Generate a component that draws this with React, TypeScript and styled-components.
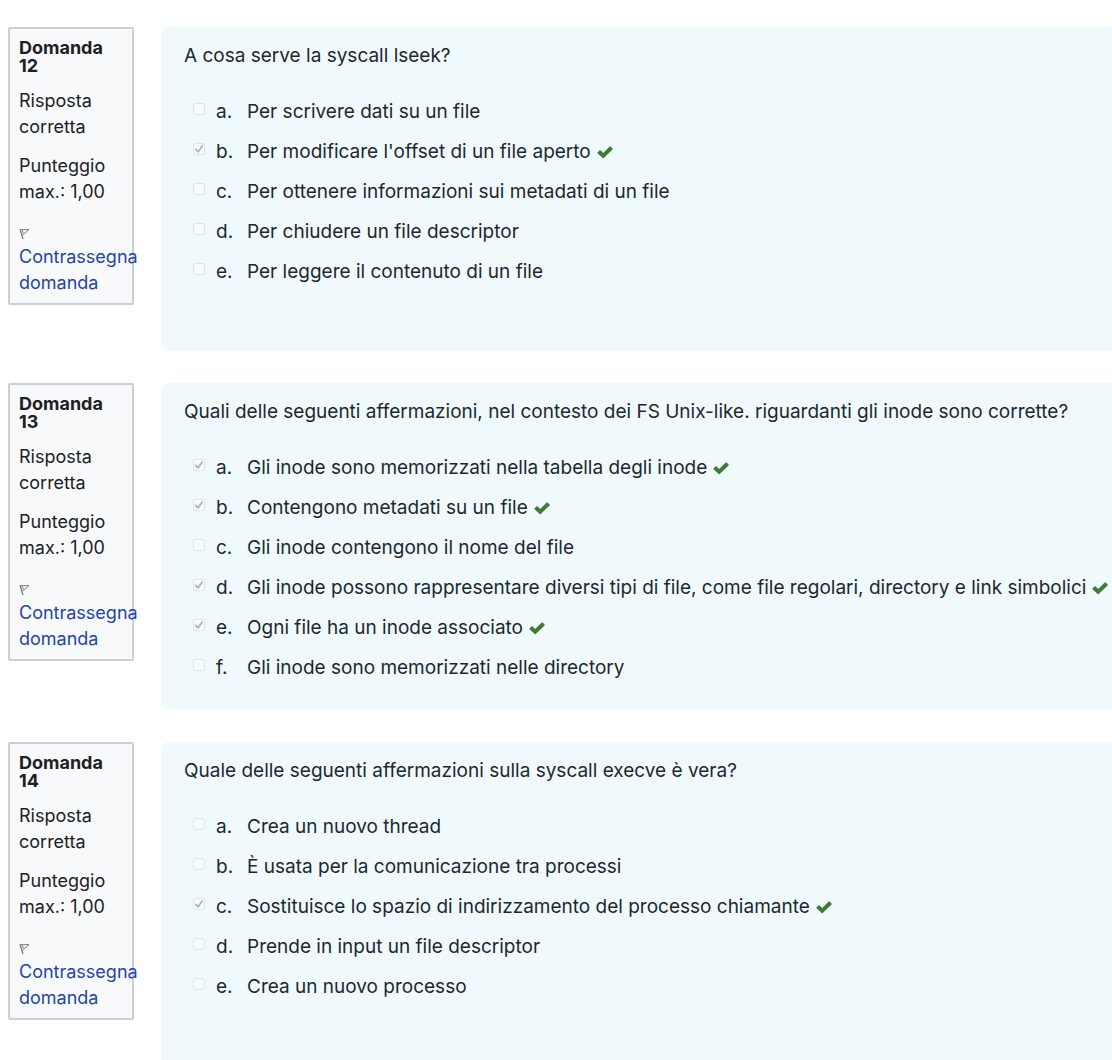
import React from "react";
import styled, { createGlobalStyle } from "styled-components";

const GlobalStyle = createGlobalStyle`
  * { box-sizing: border-box; }
  body {
    margin: 0;
    background: #ffffff;
    color: #1d2125;
    font-family: Inter, "Liberation Sans", sans-serif;
    font-size: 19px;
    line-height: 26px;
  }
`;

const Page = styled.main`
  display: flex;
  flex-direction: column;
  gap: 32px;
  padding: 27px 0 32px 8px;
`;

const QuestionBlock = styled.section`
  display: flex;
  align-items: flex-start;
  gap: 27px;
`;

const Info = styled.aside`
  flex: 0 0 126px;
  min-width: 0;
  display: flex;
  flex-direction: column;
  gap: 13px;
  padding: 10px 9px 7px;
  border: 2px solid #cad0d7;
  border-radius: 2px;
  background: #f8f9fb;
  font-size: 18px;
`;

const InfoTitle = styled.h3`
  margin: 0;
  font-size: 18px;
  line-height: 18px;
  font-weight: 700;
`;

const InfoText = styled.div``;

const FlagLink = styled.a`
  display: block;
  color: #1f45a8;
  text-decoration: none;
`;

const FlagIcon = styled.svg`
  display: block;
  width: 11px;
  height: 26px;
`;

const Formulation = styled.form`
  flex: 1;
  min-width: 0;
  min-height: 324px;
  padding: 16px 0 22px 23px;
  border-radius: 8px 0 0 8px;
  background: #f0f9fc;
  color: #1b292e;
`;

const Prompt = styled.p`
  margin: 0 0 23px;
`;

const Answers = styled.ol`
  list-style: none;
  margin: 0;
  padding: 0 0 0 9px;
`;

const Answer = styled.li`
  display: flex;
  align-items: center;
  min-height: 40px;
`;

const BoxCell = styled.span`
  display: grid;
  width: 12px;
  height: 12px;
  margin: 0 11px 6px 0;

  > * { grid-area: 1 / 1; }
`;

const Box = styled.input`
  appearance: none;
  width: 12px;
  height: 12px;
  margin: 0;
  border: 1px solid #e0e4e6;
  border-radius: 2px;
  background: #f8fbfc;
`;

const BoxMark = styled.svg`
  width: 12px;
  height: 12px;
  pointer-events: none;
`;

const AnswerLabel = styled.label`
  display: flex;
`;

const Letter = styled.span`
  flex: 0 0 31px;
`;

const CorrectMark = styled.svg`
  flex: none;
  width: 16px;
  height: 14px;
  margin-left: 6px;
`;

interface Option {
  text: string;
  checked?: boolean;
}

interface Question {
  number: number;
  prompt: string;
  options: Option[];
}

const questions: Question[] = [
  {
    number: 12,
    prompt: "A cosa serve la syscall lseek?",
    options: [
      { text: "Per scrivere dati su un file" },
      { text: "Per modificare l'offset di un file aperto", checked: true },
      { text: "Per ottenere informazioni sui metadati di un file" },
      { text: "Per chiudere un file descriptor" },
      { text: "Per leggere il contenuto di un file" },
    ],
  },
  {
    number: 13,
    prompt:
      "Quali delle seguenti affermazioni, nel contesto dei FS Unix-like. riguardanti gli inode sono corrette?",
    options: [
      { text: "Gli inode sono memorizzati nella tabella degli inode", checked: true },
      { text: "Contengono metadati su un file", checked: true },
      { text: "Gli inode contengono il nome del file" },
      {
        text: "Gli inode possono rappresentare diversi tipi di file, come file regolari, directory e link simbolici",
        checked: true,
      },
      { text: "Ogni file ha un inode associato", checked: true },
      { text: "Gli inode sono memorizzati nelle directory" },
    ],
  },
  {
    number: 14,
    prompt: "Quale delle seguenti affermazioni sulla syscall execve è vera?",
    options: [
      { text: "Crea un nuovo thread" },
      { text: "È usata per la comunicazione tra processi" },
      { text: "Sostituisce lo spazio di indirizzamento del processo chiamante", checked: true },
      { text: "Prende in input un file descriptor" },
      { text: "Crea un nuovo processo" },
    ],
  },
];

function QuestionView({ question }: { question: Question }) {
  return (
    <QuestionBlock>
      <Info>
        <InfoTitle>Domanda {question.number}</InfoTitle>
        <InfoText>Risposta corretta</InfoText>
        <InfoText>Punteggio max.: 1,00</InfoText>
        <FlagLink href="#">
          <FlagIcon viewBox="0 0 11 26" fill="none" stroke="#7b7e80" aria-hidden="true">
            <path d="M1 11.2 4 21" strokeWidth="1.3" />
            <path d="M1.2 11.6H10L3.6 17M3.2 12.2l1.2 3.4" strokeWidth="1" />
          </FlagIcon>
          Contrassegna domanda
        </FlagLink>
      </Info>
      <Formulation>
        <Prompt>{question.prompt}</Prompt>
        <Answers>
          {question.options.map((option, index) => {
            const id = `q${question.number}-${index}`;
            return (
              <Answer key={id}>
                <BoxCell>
                  <Box type="checkbox" id={id} defaultChecked={option.checked} disabled />
                  {option.checked && (
                    <BoxMark viewBox="0 0 12 12" fill="none" stroke="#b0b4b6" strokeWidth="1.8" aria-hidden="true">
                      <path d="M2.8 6.4 5 8.9 9.2 3" strokeLinecap="round" strokeLinejoin="round" />
                    </BoxMark>
                  )}
                </BoxCell>
                <AnswerLabel htmlFor={id}>
                  <Letter>{"abcdef"[index]}.</Letter>
                  <span>{option.text}</span>
                </AnswerLabel>
                {option.checked && (
                  <CorrectMark viewBox="0 0 16 14" role="img" aria-label="Risposta corretta">
                    <path
                      d="M.5 7.6 2.7 5.3Q3 5 3.4 5.3L6.2 8 12.7 1.5Q13.1 1.1 13.5 1.5L15.6 3.6Q16 4 15.6 4.4L6.7 13Q6.2 13.4 5.7 13L.5 8.2Q.2 7.9.5 7.6Z"
                      fill="#3f7a37"
                    />
                  </CorrectMark>
                )}
              </Answer>
            );
          })}
        </Answers>
      </Formulation>
    </QuestionBlock>
  );
}

export default function App() {
  return (
    <>
      <GlobalStyle />
      <Page>
        {questions.map((question) => (
          <QuestionView key={question.number} question={question} />
        ))}
      </Page>
    </>
  );
}
